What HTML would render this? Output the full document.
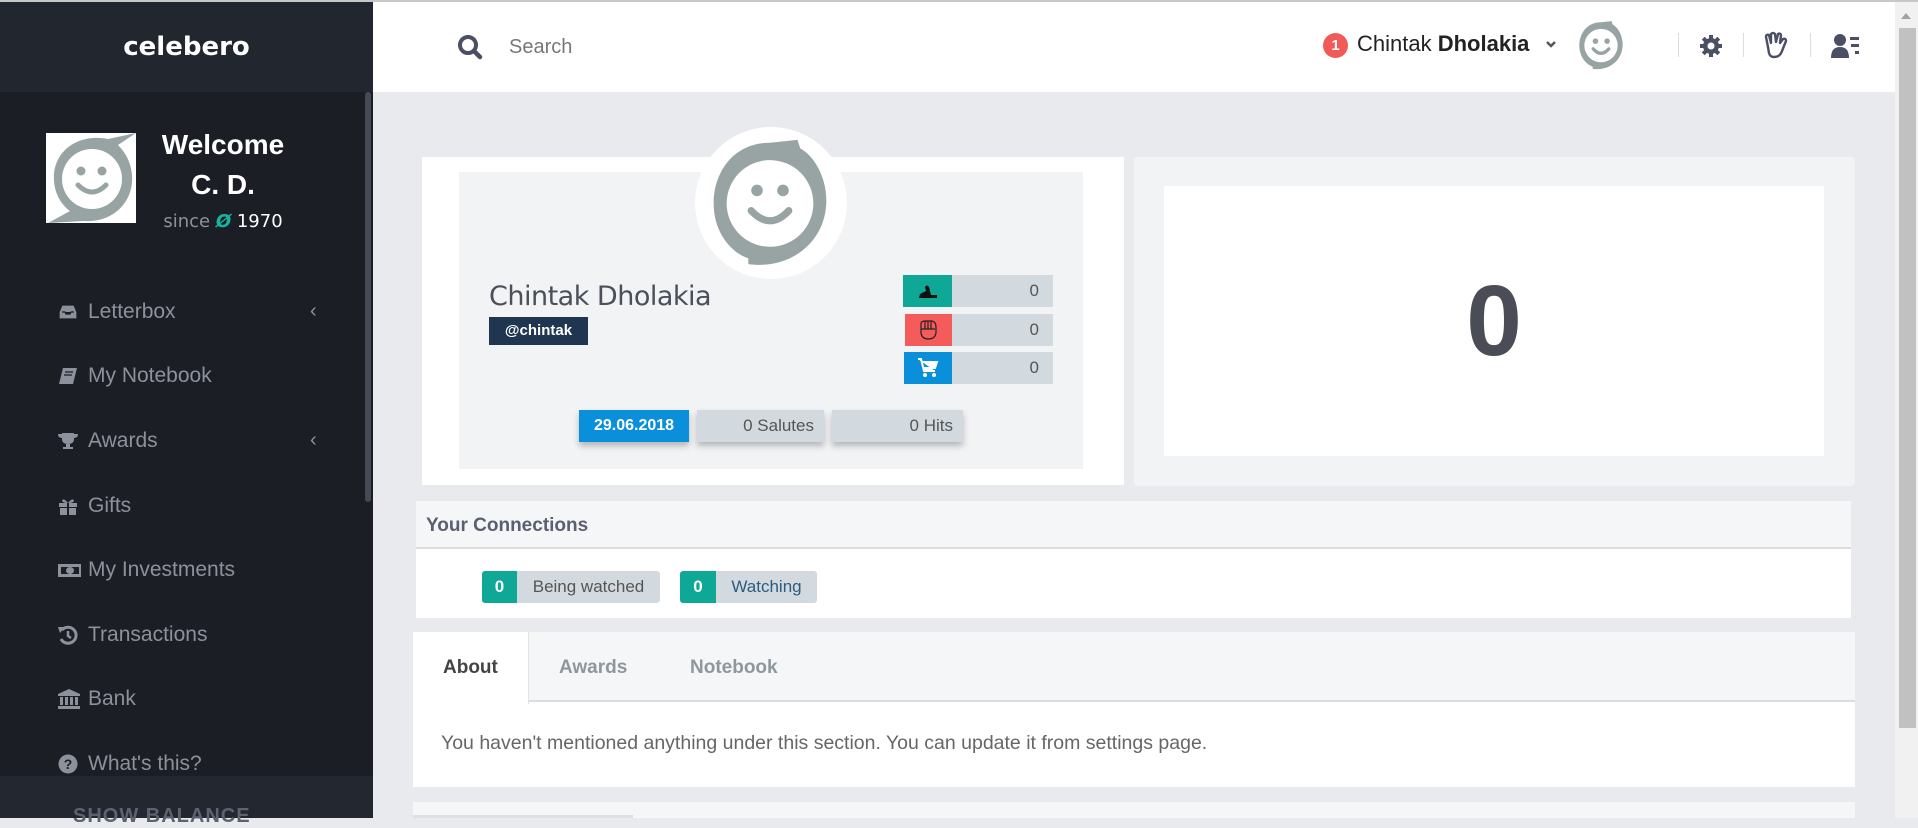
<!DOCTYPE html>
<html><head><meta charset="utf-8"><style>
*{box-sizing:border-box;margin:0;padding:0}
body{width:1918px;height:818px;overflow:hidden;background:#e9eaed;font-family:"Liberation Sans",sans-serif;position:relative}
.a{position:absolute}
.side{left:0;top:2px;width:373px;height:816px;background:#1b1e25}
.menu{left:57px;color:#8c919b;font-size:21px}
.menu .ic{position:absolute;left:0;top:-10px;width:22px;height:22px}
.menu span{position:absolute;left:31px;top:-11px;white-space:nowrap}
.chev{color:#8c919b;font-size:20px}
</style></head><body>
<div class="a" style="left:0;top:0;width:1918px;height:2px;background:#c8c8c8"></div>
<div class="a side"></div>
<div class="a" style="left:0;top:2px;width:373px;height:90px;background:#22262f"></div>
<div class="a" style="left:0;top:32px;width:373px;text-align:center;color:#fff;font-weight:bold;font-size:26px;font-family:'DejaVu Sans',sans-serif">celebero</div>
<div class="a" style="left:365px;top:92px;width:6px;height:410px;background:#454a54;border-radius:3px"></div>
<div class="a" style="left:46px;top:133px;width:90px;height:90px;background:#fff">
<svg width="90" height="90" viewBox="0 0 90 90"><path d="M90 0 L62 6 C30 0 6 20 8 48 C9 62 16 72 24 78 L2 90 L38 88 C68 90 88 68 86 42 C85 30 80 20 72 12 Z" fill="#98a4a3"/><circle cx="46" cy="46" r="30" fill="#fff"/><circle cx="35" cy="38" r="4.5" fill="#98a4a3"/><circle cx="56" cy="38" r="4.5" fill="#98a4a3"/><path d="M32 52 Q46 66 60 52" stroke="#98a4a3" stroke-width="5" fill="none" stroke-linecap="round"/></svg></div>
<div class="a" style="left:150px;top:125px;width:146px;text-align:center;color:#fff;font-weight:bold;font-size:28px;line-height:40px">Welcome<br>C. D.</div>
<div class="a" style="left:150px;top:211px;width:146px;text-align:center;color:#8c919b;font-size:18px;font-family:'DejaVu Sans',sans-serif">since <span style="color:#16b3a0;font-weight:bold;font-style:italic">Ø</span> <span style="color:#fff">1970</span></div>
<div class="a menu" style="top:311px"><svg class="ic" viewBox="0 0 22 22"><path d="M2 11 L5 4 H17 L20 11 V18 H2Z M5 11 H8 L9 13 H13 L14 11 H17" fill="#8c919b" stroke="#1b1e25" stroke-width="1.3"/></svg><span>Letterbox</span></div>
<div class="a chev" style="left:310px;top:300px">&lsaquo;</div>
<div class="a menu" style="top:375px"><svg class="ic" viewBox="0 0 22 22"><path d="M6 3 H20 L16 19 H2Z" fill="#8c919b"/><path d="M8 7 H16 M7 10 H15" stroke="#1b1e25" stroke-width="1.3"/></svg><span>My Notebook</span></div>
<div class="a menu" style="top:440px"><svg class="ic" viewBox="0 0 22 22"><path d="M5 3 H17 V9 Q17 14 11 14 Q5 14 5 9Z M1 4 H5 V8 Q1 8 1 4Z M21 4 H17 V8 Q21 8 21 4Z M9 14 H13 V17 H16 V19 H6 V17 H9Z" fill="#8c919b"/></svg><span>Awards</span></div>
<div class="a chev" style="left:310px;top:429px">&lsaquo;</div>
<div class="a menu" style="top:505px"><svg class="ic" viewBox="0 0 22 22"><path d="M2 8 H20 V12 H2Z M3 13 H19 V20 H3Z" fill="#8c919b"/><path d="M11 8 V20" stroke="#1b1e25" stroke-width="2"/><path d="M11 8 Q6 2 5 6 Q6 8 11 8 Q16 2 17 6 Q16 8 11 8" fill="#8c919b"/></svg><span>Gifts</span></div>
<div class="a menu" style="top:569px"><svg class="ic" viewBox="0 0 22 22" style="width:26px;left:-2px"><rect x="1" y="5" width="24" height="13" fill="#8c919b"/><rect x="4" y="8" width="18" height="7" fill="#1b1e25"/><ellipse cx="13" cy="11.5" rx="4" ry="3.5" fill="#8c919b"/></svg><span>My Investments</span></div>
<div class="a menu" style="top:634px"><svg class="ic" viewBox="0 0 22 22"><path d="M5 6 A8 8 0 1 1 4 15" stroke="#8c919b" stroke-width="3" fill="none"/><path d="M1 3 L8 3 L3 9Z" fill="#8c919b"/><path d="M11 7 V12 L14 14" stroke="#8c919b" stroke-width="2.5" fill="none"/></svg><span>Transactions</span></div>
<div class="a menu" style="top:698px"><svg class="ic" viewBox="0 0 22 22" style="width:24px;left:-1px"><path d="M12 1 L23 6 V8 H1 V6Z M3 9 H6 V17 H3Z M8 9 H11 V17 H8Z M13 9 H16 V17 H13Z M18 9 H21 V17 H18Z M1 18 H23 V21 H1Z" fill="#8c919b"/></svg><span>Bank</span></div>
<div class="a menu" style="top:763px"><svg class="ic" viewBox="0 0 22 22"><circle cx="11" cy="11" r="9.5" fill="#8c919b"/><text x="11" y="16" text-anchor="middle" font-size="14" font-weight="bold" fill="#1b1e25" font-family="Liberation Sans">?</text></svg><span>What's this?</span></div>
<div class="a" style="left:0;top:776px;width:373px;height:42px;background:#232730"></div>
<div class="a" style="left:73px;top:805px;color:#5c6270;font-weight:bold;font-size:20px;letter-spacing:1px">SHOW BALANCE</div>

<div class="a" style="left:373px;top:2px;width:1522px;height:90px;background:#fff"></div>
<svg class="a" style="left:457px;top:34px" width="26" height="26" viewBox="0 0 26 26"><circle cx="11" cy="11" r="8" stroke="#4a4f63" stroke-width="4" fill="none"/><path d="M17 17 L23 23" stroke="#4a4f63" stroke-width="4.5" stroke-linecap="round"/></svg>
<div class="a" style="left:509px;top:36px;color:#777;font-size:20px">Search</div>
<div class="a" style="left:1323px;top:33px;width:25px;height:25px;border-radius:50%;background:#f25a5a;color:#fff;font-size:15px;font-weight:bold;text-align:center;line-height:25px">1</div>
<div class="a" style="left:1357px;top:31px;color:#222;font-size:22px">Chintak <b>Dholakia</b></div>
<svg class="a" style="left:1545px;top:40px" width="12" height="9" viewBox="0 0 12 9"><path d="M2 2 L6 6 L10 2" stroke="#555" stroke-width="2.5" fill="none"/></svg>
<svg class="a" style="left:1576px;top:20px" width="50" height="50" viewBox="0 0 90 90"><path d="M45 4 C20 4 6 24 6 46 C6 66 18 80 30 84 L30 88 C60 92 84 72 84 44 C84 26 74 12 66 8 L64 2 Z" fill="#98a4a3"/><circle cx="45" cy="46" r="30" fill="#fff"/><circle cx="35" cy="38" r="5" fill="#98a4a3"/><circle cx="56" cy="38" r="5" fill="#98a4a3"/><path d="M31 52 Q45 68 59 52" stroke="#98a4a3" stroke-width="6" fill="none" stroke-linecap="round"/></svg>
<div class="a" style="left:1678px;top:33px;width:1px;height:24px;background:#ddd"></div>
<div class="a" style="left:1743px;top:33px;width:1px;height:24px;background:#ddd"></div>
<div class="a" style="left:1810px;top:33px;width:1px;height:24px;background:#ddd"></div>
<svg class="a" style="left:1699px;top:34px" width="24" height="24" viewBox="0 0 24 24"><g fill="#4a4f63"><circle cx="12" cy="12" r="8"/><rect x="10" y="1" width="4" height="22"/><rect x="1" y="10" width="22" height="4"/><rect x="10" y="1" width="4" height="22" transform="rotate(45 12 12)"/><rect x="10" y="1" width="4" height="22" transform="rotate(-45 12 12)"/></g><circle cx="12" cy="12" r="3.5" fill="#fff"/></svg>
<svg class="a" style="left:1762px;top:31px" width="30" height="30" viewBox="0 0 30 30"><path d="M6 16 L4 6 Q4 3 7 4 L9 12 L9 3 Q11 1 13 3 L14 11 L16 3 Q18 2 19 4 L18 12 L21 8 Q24 7 24 10 L20 20 Q18 26 12 26 Q8 26 7 22Z" fill="none" stroke="#4a4f63" stroke-width="2.4" stroke-linejoin="round"/></svg>
<svg class="a" style="left:1831px;top:33px" width="30" height="26" viewBox="0 0 30 26"><circle cx="9" cy="7" r="6" fill="#4a4f63"/><path d="M0 25 Q0 14 9 14 Q18 14 18 25Z" fill="#4a4f63"/><rect x="19" y="4" width="9" height="3" fill="#4a4f63"/><rect x="20" y="11" width="8" height="3" fill="#4a4f63"/><rect x="24" y="18" width="4" height="3" fill="#4a4f63"/></svg>
<div class="a" style="left:1895px;top:2px;width:23px;height:816px;background:#f1f1f1"></div>
<div class="a" style="left:1899px;top:28px;width:17px;height:700px;background:#c1c1c1"></div>
<svg class="a" style="left:1900px;top:12px" width="12" height="8"><path d="M1 7 L6 1 L11 7Z" fill="#a3a3a3"/></svg>

<div class="a" style="left:422px;top:157px;width:702px;height:328px;background:#fff"></div>
<div class="a" style="left:459px;top:172px;width:624px;height:297px;background:#f2f3f5"></div>
<div class="a" style="left:695px;top:127px;width:152px;height:152px;border-radius:50%;background:#fff"></div>
<svg class="a" style="left:705px;top:137px" width="130" height="130" viewBox="0 0 90 90"><path d="M45 4 C20 4 6 24 6 46 C6 66 18 80 30 84 L30 88 C60 92 84 72 84 44 C84 26 74 12 66 8 L64 2 Z" fill="#98a4a3"/><circle cx="45" cy="46" r="30" fill="#fff"/><circle cx="36" cy="37" r="4" fill="#98a4a3"/><circle cx="54" cy="37" r="4" fill="#98a4a3"/><path d="M32 51 Q45 65 58 51" stroke="#98a4a3" stroke-width="5" fill="none" stroke-linecap="round"/></svg>
<div class="a" style="left:489px;top:281px;color:#4a4f5a;font-size:27px;font-family:'DejaVu Sans',sans-serif;letter-spacing:-0.5px">Chintak Dholakia</div>
<div class="a" style="left:489px;top:317px;width:99px;height:28px;background:#1f3550;color:#fff;font-weight:bold;font-size:15px;text-align:center;line-height:28px">@chintak</div>
<div class="a" style="left:903px;top:275px;width:49px;height:32px;background:#0fa795"></div>
<svg class="a" style="left:917px;top:282px" width="22" height="18"><path d="M2 16 H20 V13 H14 L12 5 Q10 2 8 5 L9 9 L3 12Z" fill="#111"/></svg>
<div class="a" style="left:905px;top:314px;width:47px;height:32px;background:#f45b5b"></div>
<svg class="a" style="left:918px;top:319px" width="20" height="22" viewBox="0 0 20 22"><path d="M3 5 Q3 2 7 2 H14 Q18 3 18 8 V14 Q17 20 10 20 Q4 20 3 14Z M7 2 V10 M10 2 V10 M13 2 V10 M3 10 H17" fill="none" stroke="#222" stroke-width="1.2"/></svg>
<div class="a" style="left:904px;top:352px;width:48px;height:32px;background:#0a8fdb"></div>
<svg class="a" style="left:917px;top:357px" width="22" height="22" viewBox="0 0 22 22"><path d="M1 2 H4 L7 14 H18 M5 5 H20 L18 11 H7" fill="#fff" stroke="#fff" stroke-width="2"/><circle cx="8" cy="18" r="2" fill="#fff"/><circle cx="17" cy="18" r="2" fill="#fff"/></svg>
<div class="a" style="left:952px;top:275px;width:101px;height:32px;background:#d2dae0;color:#555;font-size:17px;text-align:right;padding-right:14px;line-height:32px">0</div>
<div class="a" style="left:952px;top:314px;width:101px;height:32px;background:#d2dae0;color:#555;font-size:17px;text-align:right;padding-right:14px;line-height:32px">0</div>
<div class="a" style="left:952px;top:352px;width:101px;height:32px;background:#d2dae0;color:#555;font-size:17px;text-align:right;padding-right:14px;line-height:32px">0</div>
<div class="a" style="left:579px;top:410px;width:110px;height:32px;background:#0a8fdb;color:#fff;font-weight:bold;font-size:16px;text-align:center;line-height:32px;box-shadow:0 4px 6px rgba(0,0,0,.25)">29.06.2018</div>
<div class="a" style="left:697px;top:410px;width:127px;height:32px;background:#d2dae0;color:#555;font-size:17px;text-align:right;padding-right:10px;line-height:32px;box-shadow:0 4px 6px rgba(0,0,0,.25)">0 Salutes</div>
<div class="a" style="left:832px;top:410px;width:131px;height:32px;background:#d2dae0;color:#555;font-size:17px;text-align:right;padding-right:10px;line-height:32px;box-shadow:0 4px 6px rgba(0,0,0,.25)">0 Hits</div>

<div class="a" style="left:1134px;top:157px;width:721px;height:329px;background:#f2f3f5;border-radius:4px"></div>
<div class="a" style="left:1164px;top:186px;width:660px;height:270px;background:#fff;text-align:center;color:#4a4d55;font-weight:bold;font-size:100px;line-height:270px">0</div>

<div class="a" style="left:416px;top:501px;width:1435px;height:117px;background:#fff"></div>
<div class="a" style="left:416px;top:501px;width:1435px;height:48px;background:#f5f6f8;border-bottom:2px solid #dcdcdc"></div>
<div class="a" style="left:426px;top:515px;color:#5a6070;font-weight:bold;font-size:19px">Your Connections</div>
<div class="a" style="left:482px;top:571px;width:35px;height:32px;background:#0fa795;border-radius:3px 0 0 3px;color:#fff;font-weight:bold;font-size:17px;text-align:center;line-height:32px">0</div>
<div class="a" style="left:517px;top:571px;width:143px;height:32px;background:#d2dae0;border-radius:0 3px 3px 0;color:#555;font-size:17px;text-align:center;line-height:32px">Being watched</div>
<div class="a" style="left:680px;top:571px;width:36px;height:32px;background:#0fa795;border-radius:3px 0 0 3px;color:#fff;font-weight:bold;font-size:17px;text-align:center;line-height:32px">0</div>
<div class="a" style="left:716px;top:571px;width:101px;height:32px;background:#d2dae0;border-radius:0 3px 3px 0;color:#2d5b80;font-size:17px;text-align:center;line-height:32px">Watching</div>

<div class="a" style="left:413px;top:632px;width:1442px;height:155px;background:#fff"></div>
<div class="a" style="left:413px;top:632px;width:1442px;height:70px;background:#f5f6f8;border-bottom:2px solid #dcdcdc"></div>
<div class="a" style="left:413px;top:632px;width:116px;height:72px;background:#fff;border-right:1px solid #e2e2e2"></div>
<div class="a" style="left:443px;top:657px;color:#444;font-weight:bold;font-size:19px">About</div>
<div class="a" style="left:559px;top:657px;color:#8e979d;font-weight:bold;font-size:19px">Awards</div>
<div class="a" style="left:690px;top:657px;color:#8e979d;font-weight:bold;font-size:19px">Notebook</div>
<div class="a" style="left:441px;top:732px;color:#666;font-size:19.5px">You haven't mentioned anything under this section. You can update it from settings page.</div>
<div class="a" style="left:413px;top:802px;width:1442px;height:16px;background:#f5f6f8"></div>
<div class="a" style="left:413px;top:815px;width:220px;height:3px;background:#e0e0e0"></div>
</body></html>
